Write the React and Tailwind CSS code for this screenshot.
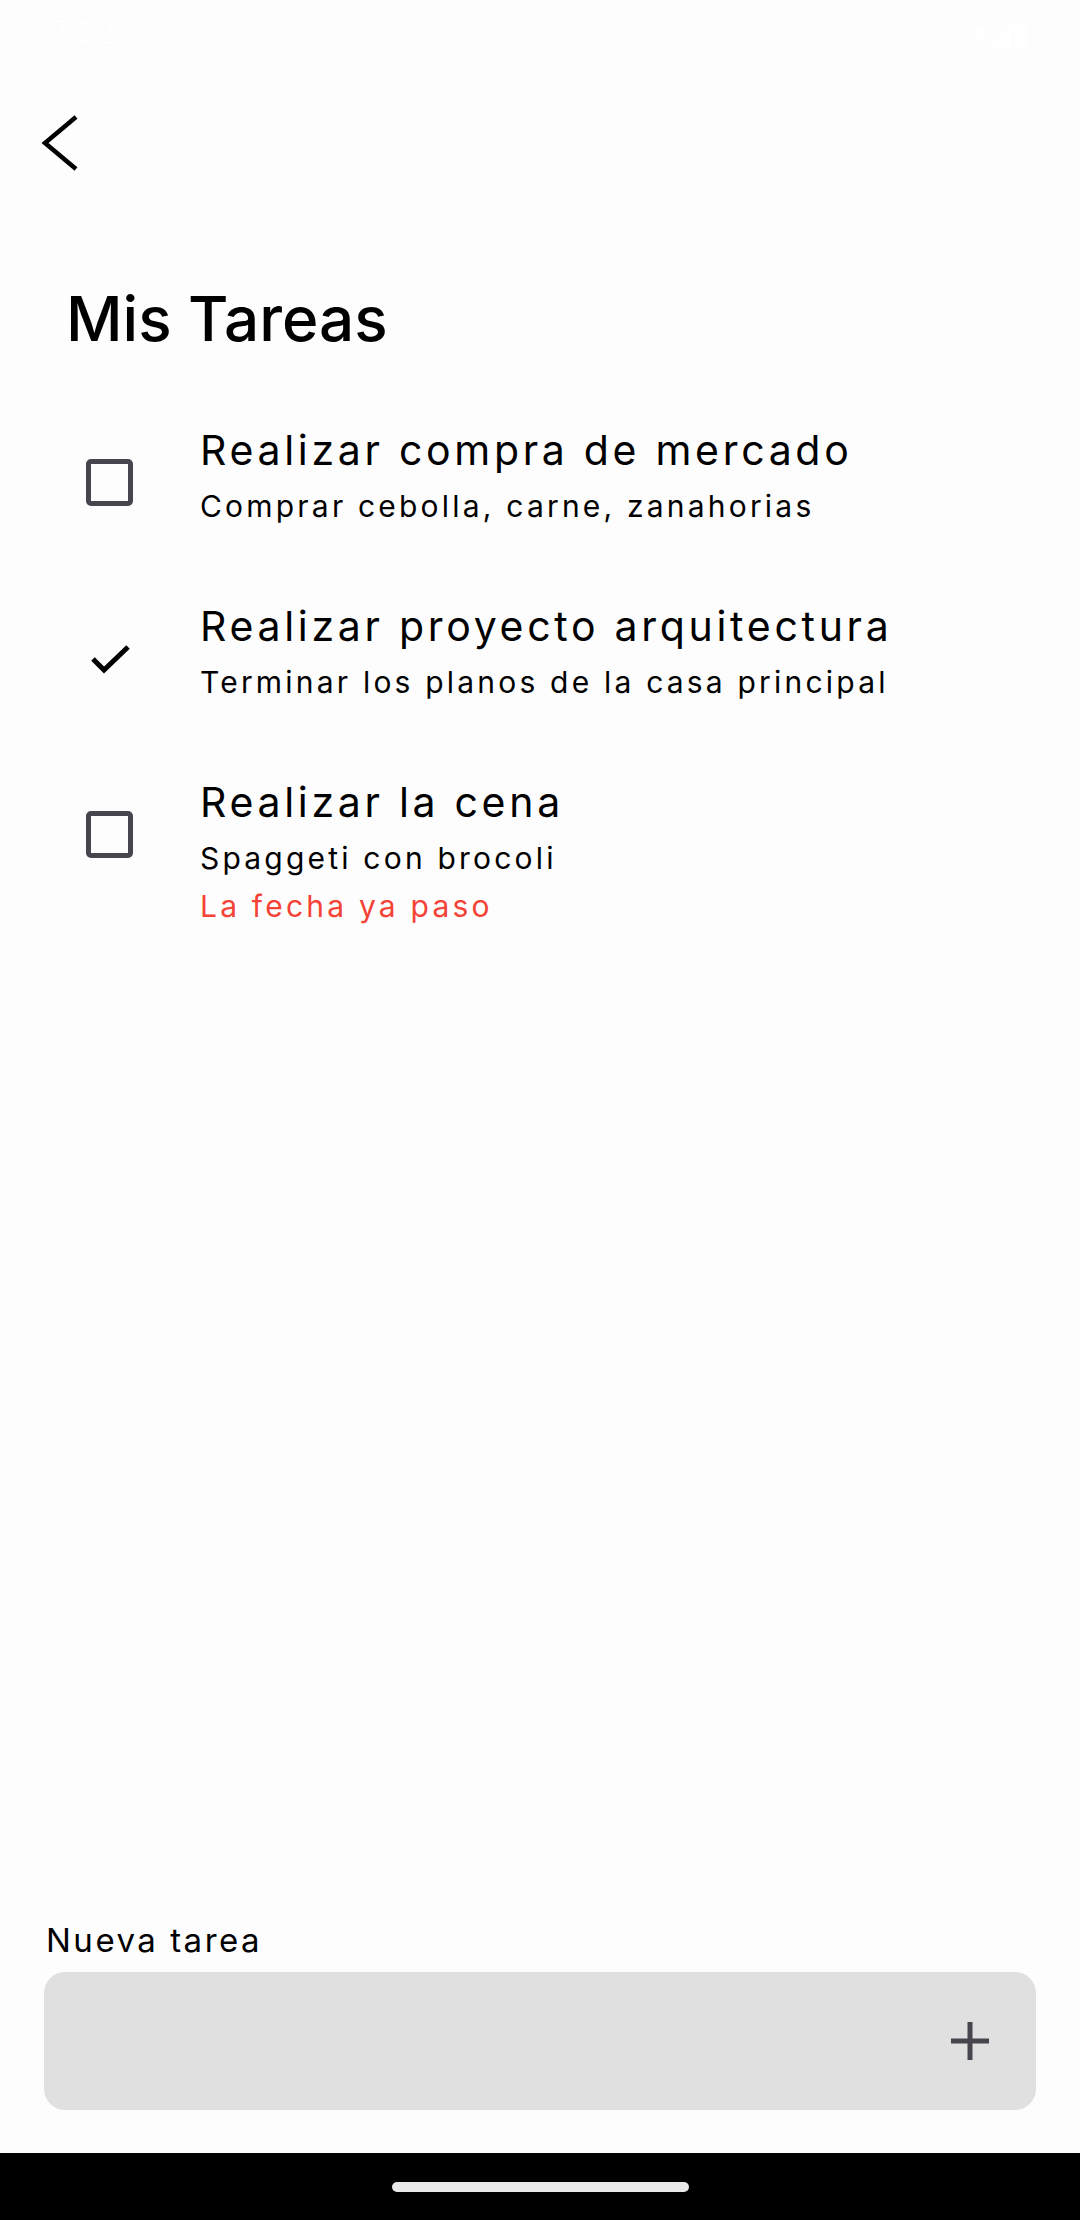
const tasks = [
  {
    title: "Realizar compra de mercado",
    description: "Comprar cebolla, carne, zanahorias",
    done: false,
  },
  {
    title: "Realizar proyecto arquitectura",
    description: "Terminar los planos de la casa principal",
    done: true,
  },
  {
    title: "Realizar la cena",
    description: "Spaggeti con brocoli",
    done: false,
    expired: true,
  },
];

function TaskRow({ task }) {
  return (
    <div className="flex pl-[86px]">
      {/* Leading */}
      <div className="w-[114px] shrink-0">
        {task.done ? (
          <svg
            viewBox="0 0 52 52"
            fill="none"
            className="mt-[39px] -ml-[2px] h-[52px] w-[52px]"
          >
            <polyline points="9,26 20,37 44,14" stroke="black" strokeWidth="5" />
          </svg>
        ) : (
          <div className="mt-[41px] h-[47px] w-[47px] rounded-[5px] border-[5px] border-[#49454f]" />
        )}
      </div>

      {/* Text */}
      <div className="flex flex-col">
        <div className="text-[41px] leading-[64px] tracking-[3.7px] text-black">
          {task.title}
        </div>
        <div className="text-[30px] leading-[48px] tracking-[3.2px] text-black">
          {task.description}
        </div>
        {task.expired && (
          <div className="text-[30px] leading-[48px] tracking-[3.2px] text-[#f44336]">
            La fecha ya paso
          </div>
        )}
      </div>
    </div>
  );
}

export default function App() {
  return (
    <div className="flex min-h-[2220px] w-[1080px] flex-col bg-[#fdfdfd] font-['Inter',sans-serif]">
      {/* Status bar (white on white) */}
      <div className="flex h-[66px] items-center justify-between px-[50px] text-[32px] text-white">
        <span>7:22</span>
        <span>▾◢▮</span>
      </div>

      {/* Back */}
      <div className="pl-[40px] pt-[47px]">
        <svg width="40" height="60" viewBox="0 0 40 60" fill="none">
          <polyline
            points="36,4 5,30 36,56"
            stroke="black"
            strokeWidth="4.5"
          />
        </svg>
      </div>

      {/* Heading */}
      <h1 className="mt-[115px] pl-[66px] text-[62px] font-medium leading-[62px] text-black">
        Mis Tareas
      </h1>

      {/* Tasks */}
      <div className="mt-[68px] flex flex-1 flex-col gap-[64px]">
        {tasks.map((t, i) => (
          <TaskRow key={i} task={t} />
        ))}
      </div>

      {/* New task */}
      <div className="px-[44px] pb-[43px]">
        <div className="pl-[2px] text-[33px] leading-[40px] tracking-[2.5px] text-black">
          Nueva tarea
        </div>
        <div className="mt-[12px] flex h-[138px] items-center justify-end rounded-[21px] bg-[#e0e0e0] pr-[47px]">
          <svg width="38" height="38" viewBox="0 0 38 38">
            <path d="M19 0v38M0 19h38" stroke="#49454f" strokeWidth="5" />
          </svg>
        </div>
      </div>

      {/* Nav bar */}
      <div className="flex h-[67px] items-start justify-center bg-black pt-[29px]">
        <div className="h-[10px] w-[297px] rounded-full bg-[#e8e8e8]" />
      </div>
    </div>
  );
}
